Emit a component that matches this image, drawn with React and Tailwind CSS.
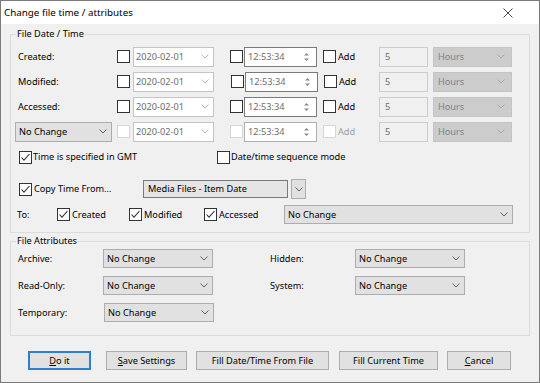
import React from 'react';

const Chevron = ({ color = '#606060' }) => (
  <svg width="8" height="5" viewBox="0 0 8 5" className="shrink-0">
    <path d="M0.5 0.5L4 4L7.5 0.5" fill="none" stroke={color} strokeWidth="1" />
  </svg>
);

function Cb({ checked = false, disabled = false }) {
  return (
    <span
      className={
        disabled
          ? 'inline-flex h-[13px] w-[13px] shrink-0 items-center justify-center border border-[#d6d6d6] bg-white'
          : 'inline-flex h-[13px] w-[13px] shrink-0 items-center justify-center border border-[#333333] bg-white'
      }
    >
      {checked && (
        <svg width="11" height="11" viewBox="0 0 11 11">
          <path d="M1.5 5.5L4 8.2L9.5 2" fill="none" stroke="#333333" strokeWidth="1.1" />
        </svg>
      )}
    </span>
  );
}

function DateBox() {
  return (
    <div className="ml-[3px] flex h-[20px] w-[81px] shrink-0 items-center justify-between border border-[#c4c4c4] bg-white pl-[2px] pr-[4px] text-[#6d6d6d]">
      <span>2020-02-01</span>
      <Chevron color="#b8b8b8" />
    </div>
  );
}

function Spinner() {
  return (
    <svg width="7" height="12" viewBox="0 0 7 12" className="shrink-0">
      <path d="M1 4.5L3.5 2L6 4.5Z" fill="#8a8a8a" />
      <path d="M1 7.5L3.5 10L6 7.5Z" fill="#8a8a8a" />
    </svg>
  );
}

function TimeBox({ dim = false }) {
  return (
    <div
      className={
        dim
          ? 'ml-[1px] flex h-[20px] w-[73px] shrink-0 items-center justify-between border border-[#b0b0b0] bg-white pl-[3px] pr-[6px] text-[#6d6d6d]'
          : 'ml-[1px] flex h-[20px] w-[73px] shrink-0 items-center justify-between border border-[#7a7a7a] bg-white pl-[3px] pr-[6px] text-[#6d6d6d]'
      }
    >
      <span>12:53:34</span>
      <Spinner />
    </div>
  );
}

function NumBox() {
  return (
    <div className="flex h-[20px] w-[49px] shrink-0 items-center border border-[#cccccc] bg-[#f0f0f0] pl-[5px] text-[#6d6d6d]">
      5
    </div>
  );
}

function Hours() {
  return (
    <div className="ml-[5px] flex h-[20px] w-[79px] shrink-0 items-center justify-between border border-[#c4c4c4] bg-[#cccccc] pl-[4px] pr-[6px] text-[#838383]">
      <span>Hours</span>
      <Chevron color="#a8a8a8" />
    </div>
  );
}

function Combo({ className, text = 'No Change' }) {
  return (
    <div
      className={
        'flex shrink-0 items-center justify-between border border-[#adadad] bg-[#e1e1e1] pl-[3px] pr-[4px] text-black ' +
        className
      }
    >
      <span>{text}</span>
      <Chevron />
    </div>
  );
}

function DateRow({ label, shift = false }) {
  return (
    <div className="flex h-[25px] items-center">
      <div className="w-[102px] shrink-0 pl-[3px]">{label}</div>
      <Cb />
      <DateBox />
      <div className={shift ? 'ml-[17px] flex shrink-0' : 'ml-[16px] flex shrink-0'}>
        <Cb />
      </div>
      <TimeBox />
      <div
        className={
          shift
            ? 'ml-[6px] flex w-[55px] shrink-0 items-center'
            : 'ml-[6px] flex w-[56px] shrink-0 items-center'
        }
      >
        <Cb />
        <span className="ml-[2px]">Add</span>
      </div>
      <NumBox />
      <Hours />
    </div>
  );
}

function Btn({ children, className }) {
  return (
    <div
      className={
        'flex h-[19px] shrink-0 items-center justify-center bg-[#e1e1e1] text-black ' + className
      }
    >
      {children}
    </div>
  );
}

export default function App() {
  return (
    <div className="flex h-[383px] w-[540px] flex-col overflow-hidden border border-[#7a7a7a] bg-[#f0f0f0] font-['Noto_Sans','Liberation_Sans',sans-serif] text-[9.2px] leading-none text-black">
      <div className="flex h-[23px] shrink-0 items-center bg-white pl-[3px]">
        <span className="text-[9.8px]">Change file time / attributes</span>
        <svg width="10" height="10" viewBox="0 0 10 10" className="ml-auto mr-[26px]">
          <path d="M0.5 0.5L9.5 9.5M9.5 0.5L0.5 9.5" stroke="#333333" strokeWidth="0.9" />
        </svg>
      </div>

      <div className="flex flex-1 flex-col px-[9px]">
        {/* File Date / Time group */}
        <div className="relative mt-[10px] h-[199px] w-[520px] shrink-0 border border-[#dcdcdc] pl-[4px] pt-[9px]">
          <span className="absolute left-[5px] top-[-6px] bg-[#f0f0f0] px-[1px]">File Date / Time</span>

          <DateRow label="Created:" />
          <DateRow label="Modified:" shift />
          <DateRow label="Accessed:" />

          <div className="flex h-[25px] items-center">
            <div className="w-[102px] shrink-0">
              <Combo className="h-[20px] w-[97px]" />
            </div>
            <Cb disabled />
            <DateBox />
            <div className="ml-[16px] flex shrink-0">
              <Cb disabled />
            </div>
            <TimeBox dim />
            <div className="ml-[6px] flex w-[56px] shrink-0 items-center">
              <Cb disabled />
              <span className="ml-[2px] text-[#a0a0a0]">Add</span>
            </div>
            <NumBox />
            <Hours />
          </div>

          <div className="flex h-[26px] items-center">
            <div className="flex w-[202px] shrink-0 items-center pl-[4px]">
              <Cb checked />
              <span className="ml-[1px]">Time is specified in GMT</span>
            </div>
            <Cb />
            <span className="ml-[1px]">Date/time sequence mode</span>
          </div>

          <div className="mt-[8px] flex h-[22px] items-center">
            <div className="flex w-[128px] shrink-0 items-center pl-[4px]">
              <Cb checked />
              <span className="ml-[2px]">Copy Time From...</span>
            </div>
            <div className="flex h-[18px] w-[145px] shrink-0 items-center border border-[#7a7a7a] bg-[#e5e5e5] pl-[4px]">
              Media Files - Item Date
            </div>
            <div className="ml-[3px] flex h-[20px] w-[15px] shrink-0 items-center justify-center border border-[#adadad] bg-[#e1e1e1]">
              <Chevron />
            </div>
          </div>

          <div className="mt-[4px] flex h-[21px] items-center">
            <div className="w-[42px] shrink-0 pl-[2px]">To:</div>
            <div className="flex w-[72px] shrink-0 items-center">
              <Cb checked />
              <span className="ml-[2px]">Created</span>
            </div>
            <div className="flex w-[75px] shrink-0 items-center">
              <Cb checked />
              <span className="ml-[2px]">Modified</span>
            </div>
            <div className="flex w-[80px] shrink-0 items-center">
              <Cb checked />
              <span className="ml-[2px]">Accessed</span>
            </div>
            <Combo className="h-[19px] w-[229px]" />
          </div>
        </div>

        {/* File Attributes group */}
        <div className="relative mt-[8px] flex h-[95px] w-[520px] shrink-0 flex-col gap-[8px] border border-[#dcdcdc] pl-[4px] pt-[7px]">
          <span className="absolute left-[5px] top-[-6px] bg-[#f0f0f0] px-[1px]">File Attributes</span>

          <div className="flex h-[19px] items-center">
            <div className="w-[88px] shrink-0 pl-[3px]">Archive:</div>
            <Combo className="h-[19px] w-[110px]" />
            <div className="w-[57px] shrink-0" />
            <div className="w-[85px] shrink-0">Hidden:</div>
            <Combo className="h-[19px] w-[110px]" />
          </div>
          <div className="flex h-[19px] items-center">
            <div className="w-[88px] shrink-0 pl-[3px]">Read-Only:</div>
            <Combo className="h-[19px] w-[110px]" />
            <div className="w-[57px] shrink-0" />
            <div className="w-[85px] shrink-0">System:</div>
            <Combo className="h-[19px] w-[110px]" />
          </div>
          <div className="flex h-[19px] items-center">
            <div className="w-[89px] shrink-0 pl-[3px]">Temporary:</div>
            <Combo className="h-[19px] w-[110px]" />
          </div>
        </div>

        {/* Buttons */}
        <div className="mt-[15px] flex items-center pl-[18px]">
          <Btn className="w-[63px] border-2 border-[#2f7fd0]">
            <span><u className="underline-offset-1">D</u>o it</span>
          </Btn>
          <Btn className="ml-[15px] w-[81px] border border-[#adadad]">
            <span><u className="underline-offset-1">S</u>ave Settings</span>
          </Btn>
          <Btn className="ml-[9px] w-[133px] border border-[#adadad]">Fill Date/Time From File</Btn>
          <Btn className="ml-[10px] w-[99px] border border-[#adadad]">Fill Current Time</Btn>
          <Btn className="ml-[9px] w-[64px] border border-[#adadad]">
            <span><u className="underline-offset-1">C</u>ancel</span>
          </Btn>
        </div>
      </div>
    </div>
  );
}
